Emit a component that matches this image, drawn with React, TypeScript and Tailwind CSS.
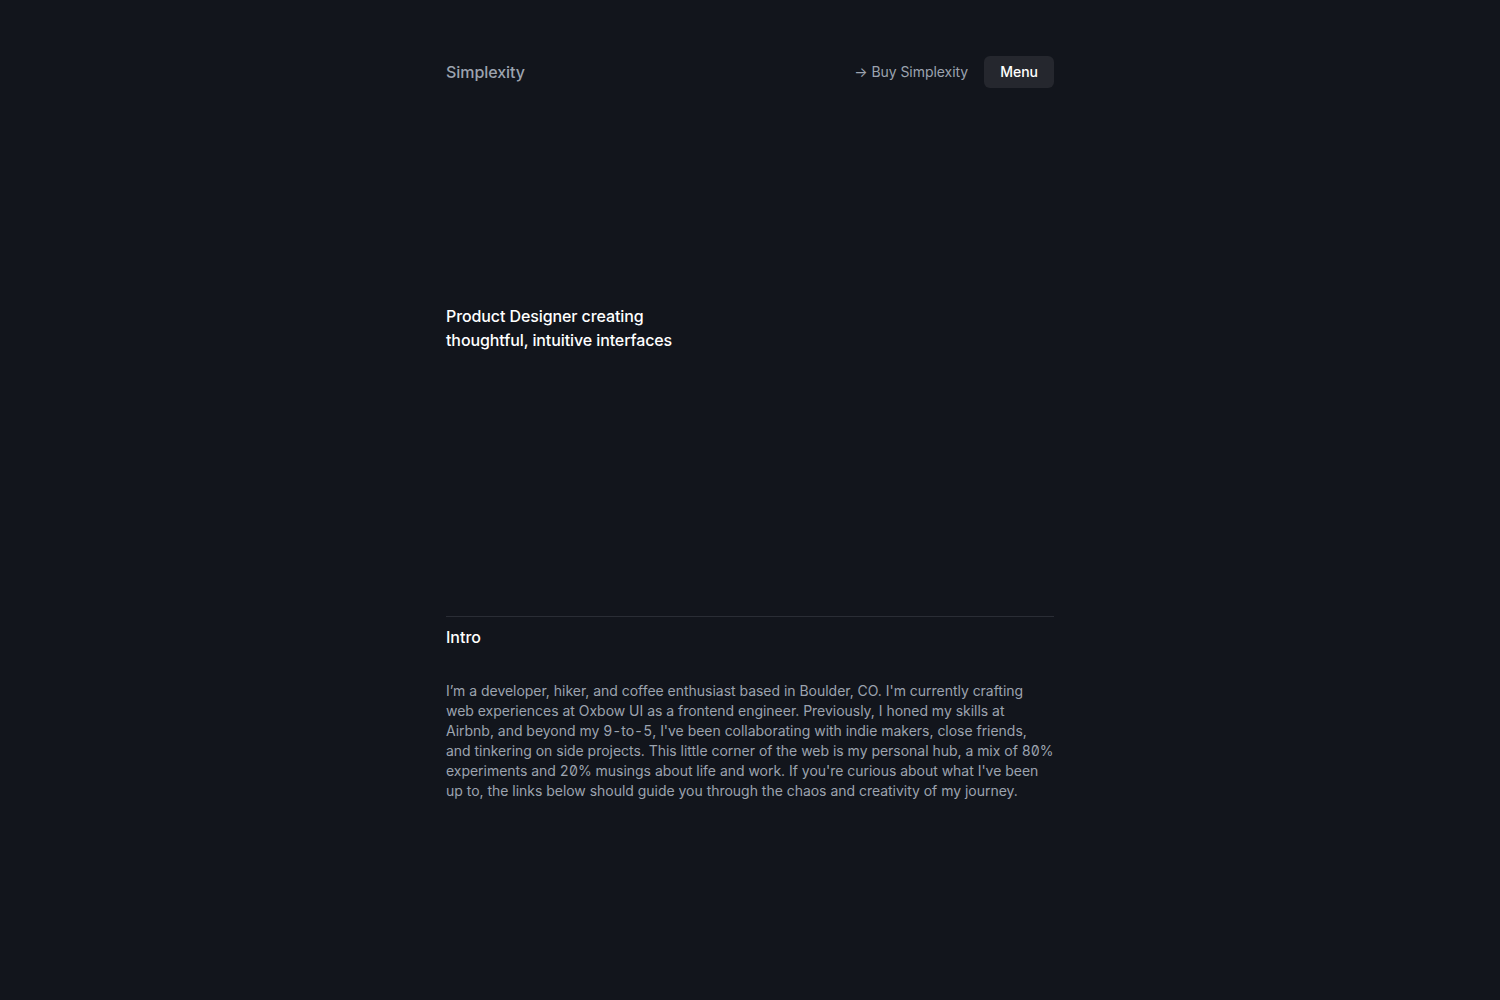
import React from 'react';

const num = 'tabular-nums slashed-zero';

export default function App() {
  return (
    <div className="min-h-screen bg-[#12151c] font-['Inter',sans-serif] antialiased">
      <div className="max-w-[608px] mx-auto pt-14">
        {/* Header */}
        <header className="flex items-center justify-between h-8">
          <span className="text-base text-[#9ca3af] font-medium tracking-[-0.05px]">Simplexity</span>
          <div className="flex items-center gap-4">
            <a className="text-sm text-[#9ca3af] tracking-[-0.05px]">→ Buy Simplexity</a>
            <button className="h-8 px-4 rounded-md bg-[#25272e] text-sm font-medium text-white">Menu</button>
          </div>
        </header>

        {/* Hero */}
        <section className="pt-[216px] h-[528px]">
          <h1 className="text-base leading-6 font-medium text-white tracking-[-0.1px]">
            Product Designer creating<br />thoughtful, intuitive interfaces
          </h1>
        </section>

        {/* Intro */}
        <section className="border-t border-[#2a2d35] pt-2">
          <h2 className="text-base leading-6 font-medium text-white">Intro</h2>
          <p className="mt-8 text-sm leading-5 text-[#9ca3af] tracking-[-0.025px]">
            I’m a developer, hiker, and coffee enthusiast based in Boulder, CO. I'm currently crafting<br />
            web experiences at Oxbow UI as a frontend engineer. Previously, I honed my skills at<br />
            Airbnb, and beyond my <span className={num}>9-to-5</span>, I've been collaborating with indie makers, close friends,<br />
            and tinkering on side projects. This little corner of the web is my personal hub, a mix of <span className={num}>80%</span><br />
            experiments and <span className={num}>20%</span> musings about life and work. If you're curious about what I've been<br />
            up to, the links below should guide you through the chaos and creativity of my journey.
          </p>
        </section>
      </div>
    </div>
  );
}
